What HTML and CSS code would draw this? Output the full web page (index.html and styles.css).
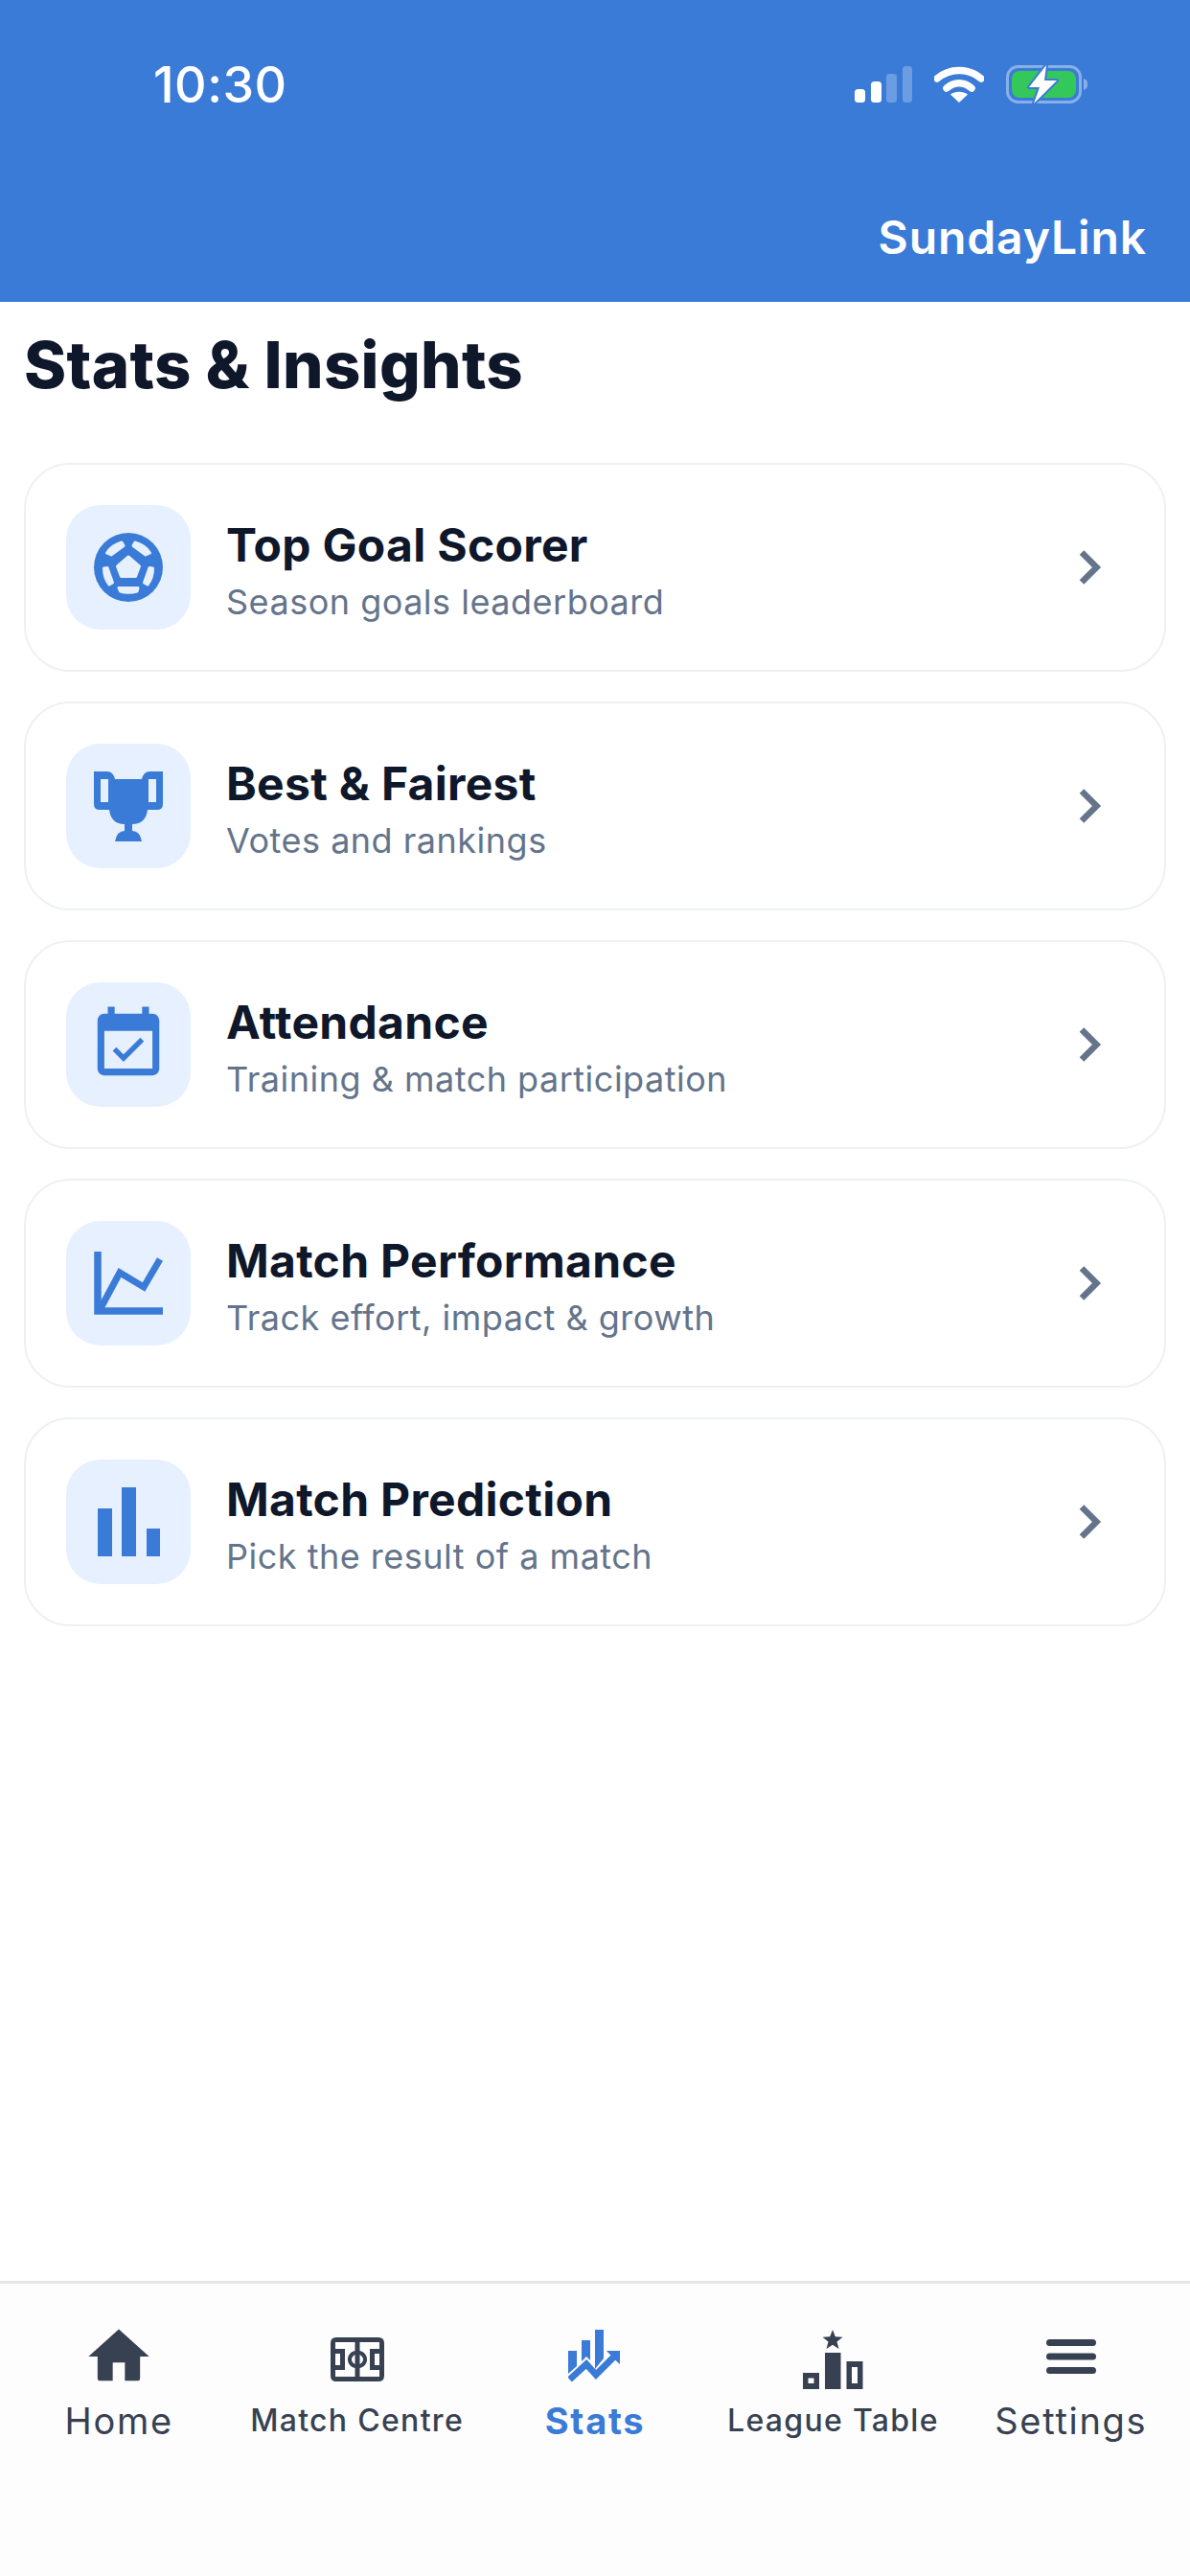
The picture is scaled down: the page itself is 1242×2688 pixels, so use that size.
FILE: index.html
```html
<!DOCTYPE html>
<html lang="en">
<head>
  <meta charset="UTF-8">
  <title>SundayLink - Stats &amp; Insights</title>
  <link rel="stylesheet" href="styles.css">
</head>
<body>
  <div class="screen">
    <header class="header">
      <div class="status">
        <span class="time">10:30</span>
        <div class="status-icons">
          <svg class="signal" width="60" height="38" viewBox="0 0 60 38">
            <rect x="0" y="24" width="11" height="14" rx="3.5" fill="#fff"/>
            <rect x="17" y="16" width="11" height="22" rx="3.5" fill="#fff"/>
            <rect x="33" y="8" width="11" height="30" rx="3.5" fill="#fff" fill-opacity=".25"/>
            <rect x="50" y="0" width="10" height="38" rx="3.5" fill="#fff" fill-opacity=".25"/>
          </svg>
          <svg class="wifi" width="52" height="38" viewBox="0 0 52 38">
            <path d="M3 13C16 1.500 36 1.500 49 13M13 23C21 16 31 16 39 23" fill="none" stroke="#fff" stroke-width="7.500" stroke-linecap="round"/>
            <path d="M17 29.500C22 25.800 30 25.800 35 29.500L26 38Z" fill="#fff"/>
          </svg>
          <svg class="battery" width="86" height="42" viewBox="0 0 86 42">
            <rect x="1.500" y="2.500" width="76" height="37" rx="11" fill="none" stroke="#fff" stroke-opacity=".4" stroke-width="3"/>
            <rect x="6" y="7" width="67" height="28" rx="8" fill="#34c759"/>
            <path d="M81 15C84 16 85 18 85 21C85 24 84 26 81 27Z" fill="#fff" fill-opacity=".4"/>
            <path d="M42 1L24 24H35L29 41L53 17H40Z" fill="#fff" stroke="#3b7bd8" stroke-width="4" stroke-linejoin="round" paint-order="stroke"/>
          </svg>
        </div>
      </div>
      <div class="brand">SundayLink</div>
    </header>

    <main class="content">
      <h1 class="page-title">Stats &amp; Insights</h1>

      <div class="card">
        <div class="card-icon">
          <svg width="72" height="72" viewBox="0 0 72 72">
            <circle cx="36" cy="36" r="36" fill="#3b7bd8"/>
            <g fill="#e6f0ff" stroke="#e6f0ff" stroke-width="3" stroke-linejoin="round">
              <path d="M36 25L47.500 35L43.500 45.500H28.500L24.500 35Z"/>
              <path d="M13.500 21C17 15.500 22 12 29 10L31 13.500L18 23Z"/>
              <path d="M58.500 21C55 15.500 50 12 43 10L41 13.500L54 23Z"/>
              <path d="M10.500 37L14 36.500L19.500 52L16 54C12 49 10.500 43 10.500 37Z"/>
              <path d="M61.500 37L58 36.500L52.500 52L56 54C60 49 61.500 43 61.500 37Z"/>
              <path d="M26 57.500H46L45 61C40 62.500 32 62.500 27.500 61Z"/>
            </g>
          </svg>
        </div>
        <div class="card-text">
          <div class="card-title">Top Goal Scorer</div>
          <div class="card-sub">Season goals leaderboard</div>
        </div>
        <svg class="chevron" width="24" height="36" viewBox="0 0 24 36"><path d="M3 2.500L18.500 18L3 33.500" fill="none" stroke="#64748b" stroke-width="6.500"/></svg>
      </div>

      <div class="card">
        <div class="card-icon">
          <svg width="72" height="73" viewBox="0 0 72 73">
            <path fill="#3b7bd8" fill-rule="evenodd" d="M0 0H14Q20 0 22 8H50Q52 0 58 0H72V34Q72 40 66 40H56Q54 55 40 55V62Q48 62 50 73H22Q24 62 32 62V55Q18 55 16 40H6Q0 40 0 34ZM7 8V32H15V8ZM57 8V32H65V8Z"/>
          </svg>
        </div>
        <div class="card-text">
          <div class="card-title">Best &amp; Fairest</div>
          <div class="card-sub">Votes and rankings</div>
        </div>
        <svg class="chevron" width="24" height="36" viewBox="0 0 24 36"><path d="M3 2.500L18.500 18L3 33.500" fill="none" stroke="#64748b" stroke-width="6.500"/></svg>
      </div>

      <div class="card">
        <div class="card-icon">
          <svg width="86" height="86" viewBox="0 0 24 24">
            <path fill="#3b7bd8" d="M16.530 11.060L15.470 10l-4.880 4.880-2.120-2.120-1.060 1.060L10.590 17l5.940-5.940zM19 3h-1V1h-2v2H8V1H6v2H5c-1.110 0-1.990.9-1.990 2L3 19c0 1.100.89 2 2 2h14c1.100 0 2-.9 2-2V5c0-1.100-.9-2-2-2zm0 16H5V8h14v11z"/>
          </svg>
        </div>
        <div class="card-text">
          <div class="card-title">Attendance</div>
          <div class="card-sub">Training &amp; match participation</div>
        </div>
        <svg class="chevron" width="24" height="36" viewBox="0 0 24 36"><path d="M3 2.500L18.500 18L3 33.500" fill="none" stroke="#64748b" stroke-width="6.500"/></svg>
      </div>

      <div class="card">
        <div class="card-icon">
          <svg width="72" height="66" viewBox="0 0 72 66">
            <path d="M4 0V62H72" fill="none" stroke="#3b7bd8" stroke-width="7.500"/>
            <path d="M6 61L27 22L52 37L69 8" fill="none" stroke="#3b7bd8" stroke-width="7"/>
          </svg>
        </div>
        <div class="card-text">
          <div class="card-title">Match Performance</div>
          <div class="card-sub">Track effort, impact &amp; growth</div>
        </div>
        <svg class="chevron" width="24" height="36" viewBox="0 0 24 36"><path d="M3 2.500L18.500 18L3 33.500" fill="none" stroke="#64748b" stroke-width="6.500"/></svg>
      </div>

      <div class="card">
        <div class="card-icon">
          <svg width="65" height="72" viewBox="0 0 65 72">
            <path fill="#3b7bd8" d="M0 22H15V72H0ZM25 0H40V72H25ZM51 43H65V72H51Z"/>
          </svg>
        </div>
        <div class="card-text">
          <div class="card-title">Match Prediction</div>
          <div class="card-sub">Pick the result of a match</div>
        </div>
        <svg class="chevron" width="24" height="36" viewBox="0 0 24 36"><path d="M3 2.500L18.500 18L3 33.500" fill="none" stroke="#64748b" stroke-width="6.500"/></svg>
      </div>
    </main>

    <nav class="tabbar">
      <div class="tab">
        <div class="tab-icon">
          <svg width="76" height="76" viewBox="0 0 24 24"><path fill="#374151" d="M10 20v-6h4v6h4.300q.7 0 .7-.7V12h3L12 3 2 12h3v7.300q0 .7.7.7z"/></svg>
        </div>
        <span class="tab-label big">Home</span>
      </div>
      <div class="tab">
        <div class="tab-icon">
          <svg class="nudge" width="56" height="46" viewBox="0 0 56 46">
            <path fill="#374151" fill-rule="evenodd" d="M6 0H50Q56 0 56 6V40Q56 46 50 46H6Q0 46 0 40V6Q0 0 6 0ZM5 5V12H15V34H5V41H25.500V32C21 31 18 27.500 18 23C18 18.500 21 15 25.500 14V5ZM30.500 5V14C35 15 38 18.500 38 23C38 27.500 35 31 30.500 32V41H51V34H41V12H51V5ZM5 17V29H10V17ZM46 17V29H51V17ZM25.500 18C23.500 19 22 21 22 23C22 25 23.500 27 25.500 28ZM30.500 18V28C32.500 27 34 25 34 23C34 21 32.500 19 30.500 18Z"/>
          </svg>
        </div>
        <span class="tab-label">Match Centre</span>
      </div>
      <div class="tab active">
        <div class="tab-icon">
          <svg width="56" height="56" viewBox="0 0 56 56">
            <path fill="#3b7bd8" d="M0 22H9V38L0 46ZM14 11H23V32L19 28L14 33ZM28 0H37V30L28 41ZM40 22H54V36L49 31.500Z"/>
            <path d="M1.500 52L19 36L29 47L50 26" fill="none" stroke="#3b7bd8" stroke-width="7"/>
          </svg>
        </div>
        <span class="tab-label big strong">Stats</span>
      </div>
      <div class="tab">
        <div class="tab-icon">
          <svg class="nudge" width="63" height="62" viewBox="0 0 63 62">
            <path fill="#374151" d="M31 0L33.800 7.300L41.500 7.700L35.500 12.600L37.500 20L31 15.800L24.500 20L26.500 12.600L20.500 7.700L28.200 7.300Z"/>
            <path fill="#374151" fill-rule="evenodd" d="M0 45H17V62H0ZM5.500 50.500V56H11.500V50.500ZM23 24H39.500V62H23ZM45.500 33H62.500V62H45.500ZM51 39V56H57V39Z"/>
          </svg>
        </div>
        <span class="tab-label">League Table</span>
      </div>
      <div class="tab">
        <div class="tab-icon">
          <svg width="52" height="36" viewBox="0 0 52 36">
            <path d="M3.500 3.500H48.500M3.500 18H48.500M3.500 32.500H48.500" fill="none" stroke="#374151" stroke-width="7" stroke-linecap="round"/>
          </svg>
        </div>
        <span class="tab-label big">Settings</span>
      </div>
    </nav>
  </div>
</body>
</html>
```

FILE: styles.css
```css
* {
  box-sizing: border-box;
}
body {
  margin: 0;
  font-family: Inter, "Noto Sans", sans-serif;
  background: #fff;
  color: #0f172a;
}
.screen {
  display: flex;
  flex-direction: column;
  height: 2688px;
}

/* header */
.header {
  height: 315px;
  flex-shrink: 0;
  background: #3b7bd8;
  color: #fff;
  display: flex;
  flex-direction: column;
  justify-content: space-between;
  padding: 62px 45px 38px 0;
}
.status {
  display: flex;
  align-items: center;
  justify-content: space-between;
  padding: 0 61px 0 160px;
  height: 52px;
}
.time {
  font-size: 52px;
  font-weight: 500;
  letter-spacing: .5px;
}
.status-icons {
  display: flex;
  align-items: center;
  gap: 23px;
}
.brand {
  align-self: flex-end;
  font-size: 48px;
  font-weight: 600;
  line-height: 58px;
  letter-spacing: .9px;
}

/* list */
.content {
  flex: 1;
  padding: 25px 25px 0;
  display: flex;
  flex-direction: column;
}
.page-title {
  margin: 0 0 61px;
  font-size: 67px;
  font-weight: 800;
  line-height: 82px;
  letter-spacing: .3px;
}
.card {
  display: flex;
  align-items: center;
  height: 218px;
  margin-bottom: 31px;
  padding: 0 65px 0 42px;
  background: #fff;
  border: 2px solid #eef0f3;
  border-radius: 48px;
}
.card-icon {
  width: 130px;
  height: 130px;
  flex-shrink: 0;
  margin-right: 37px;
  display: flex;
  align-items: center;
  justify-content: center;
  background: #e6f0ff;
  border-radius: 36px;
}
.card-text {
  flex: 1;
  padding-top: 6px;
}
.card-title {
  font-size: 48px;
  font-weight: 700;
  line-height: 60px;
  letter-spacing: .3px;
}
.card-sub {
  margin-top: 6px;
  font-size: 36px;
  line-height: 46px;
  letter-spacing: .5px;
  color: #64748b;
}

/* tabs */
.tabbar {
  height: 308px;
  flex-shrink: 0;
  display: flex;
  padding-top: 38px;
  background: #fdfdfd;
  border-top: 3px solid #e5e5ea;
}
.tab {
  flex: 1;
  display: flex;
  flex-direction: column;
  align-items: center;
  color: #374151;
}
.tab-icon {
  height: 76px;
  display: flex;
  align-items: center;
  justify-content: center;
}
.nudge {
  margin-top: 6px;
}
.tab-label {
  margin-top: 5px;
  font-size: 32px;
  font-weight: 500;
  line-height: 48px;
  letter-spacing: 1.3px;
  white-space: nowrap;
}
.tab-label.big {
  font-size: 38px;
  font-weight: 400;
  letter-spacing: 1.7px;
}
.tab-label.strong {
  font-weight: 700;
}
.tab.active {
  color: #3b7bd8;
}
```
